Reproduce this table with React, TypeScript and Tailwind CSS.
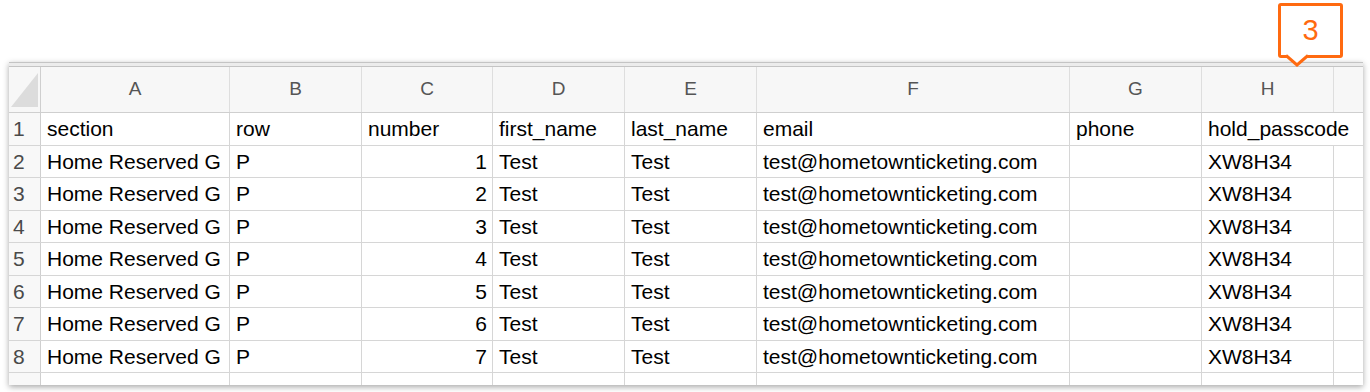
import React from "react";

const cols = [
  { key: "A", w: "w-[189px]" },
  { key: "B", w: "w-[132px]" },
  { key: "C", w: "w-[131px]" },
  { key: "D", w: "w-[132px]" },
  { key: "E", w: "w-[132px]" },
  { key: "F", w: "w-[313px]" },
  { key: "G", w: "w-[132px]" },
  { key: "H", w: "w-[132px]" },
];

const header = ["section", "row", "number", "first_name", "last_name", "email", "phone", "hold_passcode"];

const rows: string[][] = [1, 2, 3, 4, 5, 6, 7].map((n) => [
  "Home Reserved G",
  "P",
  String(n),
  "Test",
  "Test",
  "test@hometownticketing.com",
  "",
  "XW8H34",
]);

const rowHeights = ["h-[33px]", "h-[32px]", "h-[33px]", "h-[32px]", "h-[33px]", "h-[32px]", "h-[33px]", "h-[32px]"];

function Row({ num, cells, h }: { num: string; cells: string[]; h: string }) {
  const isHead = num === "1";
  return (
    <div className={`flex ${h} border-b border-[#d6d6d6]`}>
      <div className="w-[32px] shrink-0 pl-[4px] flex items-center bg-[#f8f8f8] border-r border-[#cfcfcf] text-[#4a4a4a]">
        {num}
      </div>
      {cols.map((c, i) => (
        <div
          key={c.key}
          className={`${c.w} shrink-0 flex items-center border-r whitespace-nowrap ${
            isHead && i === 7 ? "border-transparent" : "border-[#d6d6d6]"
          } ${i === 2 && !isHead ? "justify-end pr-[5px]" : "pl-[6px]"}`}
        >
          {cells[i]}
        </div>
      ))}
      <div className="flex-1" />
    </div>
  );
}

export default function App() {
  return (
    <div className="relative w-[1370px] h-[392px] bg-white overflow-hidden font-['Liberation_Sans',Arial,sans-serif] text-[21px] text-black">
      <div className="pl-[9px] pt-[62px]">
        <div className="w-[1354px] h-[323px] overflow-hidden bg-white shadow-[0_2px_6px_rgba(0,0,0,0.35)]">
          {/* top strip */}
          <div className="h-[5px] border-t border-b border-[#c4c4c4] bg-[#ececec]" />
          {/* column letters */}
          <div className="flex h-[46px] bg-[#f7f7f7] border-b border-[#cfcfcf] text-[19px] text-[#555]">
            <div className="w-[32px] shrink-0 border-r border-[#cfcfcf] flex items-end pb-[5px] pl-[2px]">
              <svg width="27" height="34" viewBox="0 0 27 34">
                <polygon points="0,34 27,34 27,0" fill="#dcdcdc" />
              </svg>
            </div>
            {cols.map((c) => (
              <div key={c.key} className={`${c.w} shrink-0 flex items-center justify-center border-r border-[#dedede]`}>
                {c.key}
              </div>
            ))}
            <div className="flex-1" />
          </div>
          <Row num="1" cells={header} h={rowHeights[0]} />
          {rows.map((r, i) => (
            <Row key={i} num={String(i + 2)} cells={r} h={rowHeights[i + 1]} />
          ))}
          <Row num="" cells={["", "", "", "", "", "", "", ""]} h="h-[32px]" />
        </div>
      </div>

      {/* callout badge */}
      <div className="absolute left-[1278px] top-[3px] w-[65px] h-[55px] border-[3px] border-[#ff6a10] rounded-[3px] bg-white flex items-center justify-center text-[29px] text-[#ff6a10] font-['Liberation_Sans',Arial,sans-serif]">
        3
      </div>
      <svg className="absolute left-[1286px] top-[54px]" width="22" height="13" viewBox="0 0 22 13">
        <polygon points="0,1 22,1 11,11" fill="white" />
        <polyline points="0,1.5 11,11 22,1.5" fill="none" stroke="#ff6a10" strokeWidth="3" strokeLinejoin="miter" />
      </svg>
    </div>
  );
}
